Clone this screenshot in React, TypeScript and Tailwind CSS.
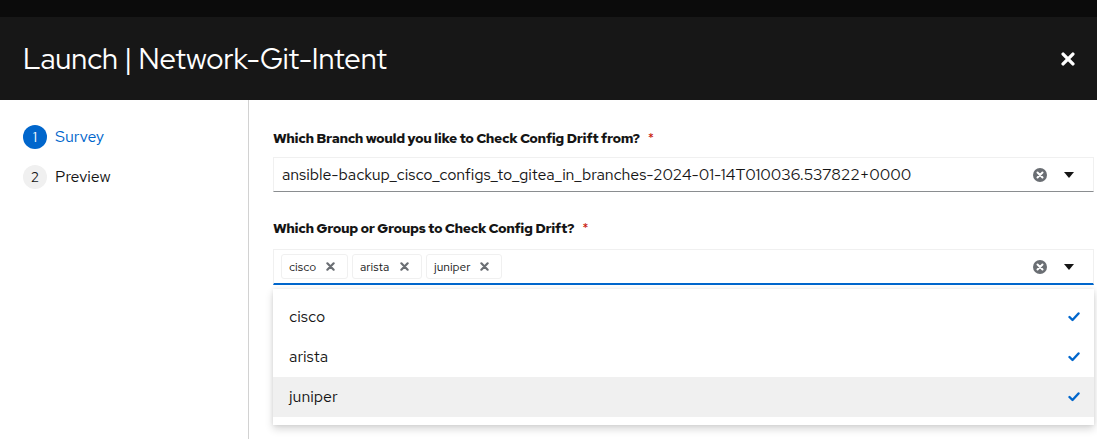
import React from "react";

const font = { fontFamily: '"Red Hat Text", "Open Sans", "Noto Sans", sans-serif' };

function ClearIcon() {
  return (
    <svg width="14" height="14" viewBox="0 0 14 14">
      <circle cx="7" cy="7" r="7" fill="#6a6e73" />
      <path d="M4.5 4.5 L9.5 9.5 M9.5 4.5 L4.5 9.5" stroke="#fff" strokeWidth="2" strokeLinecap="round" />
    </svg>
  );
}

function Caret() {
  return (
    <svg width="10" height="6" viewBox="0 0 10 6">
      <path d="M0 0 L10 0 L5 6 Z" fill="#151515" />
    </svg>
  );
}

function SmallX({ color = "#6a6e73", size = 9 }: { color?: string; size?: number }) {
  return (
    <svg width={size} height={size} viewBox="0 0 10 10">
      <path d="M1.5 1.5 L8.5 8.5 M8.5 1.5 L1.5 8.5" stroke={color} strokeWidth="2.4" strokeLinecap="round" />
    </svg>
  );
}

function Check() {
  return (
    <svg width="12" height="10" viewBox="0 0 12 10">
      <path d="M1.5 5 L4.5 8 L10.5 1.5" stroke="#0066cc" strokeWidth="2.4" fill="none" strokeLinecap="round" strokeLinejoin="round" />
    </svg>
  );
}

function Chip({ label, w }: { label: string; w: string }) {
  return (
    <div className={`flex h-[25px] items-center justify-between rounded-[3px] border border-[#f0f0f0] bg-white pl-[7px] pr-[12px] text-[12px] text-[#151515] ${w}`}>
      <span>{label}</span>
      <SmallX />
    </div>
  );
}

export default function App() {
  return (
    <div className="relative h-[439px] w-[1097px] overflow-hidden bg-white" style={font}>
      <div className="h-[17px] bg-[#0b0b0b]" />
      <div className="flex h-[83px] items-center justify-between bg-[#171717] pl-[23px] pr-[22px]">
        <h1 className="text-[29px] leading-none text-white" style={{ fontFamily: '"Red Hat Display", "Open Sans", "Noto Sans", sans-serif' }}>
          Launch | Network-Git-Intent
        </h1>
        <SmallX color="#ffffff" size={14} />
      </div>
      <div className="flex h-[339px]">
        <div className="w-[249px] shrink-0 border-r border-[#d2d2d2] pl-[23px] pt-[25px]">
          <div className="flex h-[24px] items-center gap-[8px]">
            <div className="flex h-[24px] w-[24px] items-center justify-center rounded-full bg-[#0066cc] text-[14px] text-white">1</div>
            <span className="text-[16px] text-[#0066cc]">Survey</span>
          </div>
          <div className="mt-[16px] flex h-[24px] items-center gap-[8px]">
            <div className="flex h-[24px] w-[24px] items-center justify-center rounded-full bg-[#f0f0f0] text-[14px] text-[#151515]">2</div>
            <span className="text-[16px] text-[#151515]">Preview</span>
          </div>
        </div>
        <div className="flex-1 pl-[24px] pr-[3px] pt-[28px]">
          <div className="flex h-[21px] items-center text-[14px] font-bold tracking-[-0.4px] text-[#151515]">
            Which Branch would you like to Check Config Drift from?
            <span className="ml-[8px] font-normal text-[#c9190b]">*</span>
          </div>
          <div className="mt-[8px] flex h-[35px] items-center border border-[#f0f0f0] border-b-[#8a8d90] pl-[8px] pr-[19px]">
            <span className="flex-1 text-[16px] tracking-[-0.08px] text-[#151515]">ansible-backup_cisco_configs_to_gitea_in_branches-2024-01-14T010036.537822+0000</span>
            <ClearIcon />
            <span className="ml-[17px]"><Caret /></span>
          </div>
          <div className="mt-[26px] flex h-[21px] items-center text-[14px] font-bold tracking-[-0.4px] text-[#151515]">
            Which Group or Groups to Check Config Drift?
            <span className="ml-[8px] font-normal text-[#c9190b]">*</span>
          </div>
          <div className="relative mt-[10px]">
            <div className="flex h-[36px] items-center border border-[#f0f0f0] border-b-2 border-b-[#0066cc] pl-[7px] pr-[19px]">
              <div className="flex flex-1 gap-[4px]">
                <Chip label="cisco" w="w-[67px]" />
                <Chip label="arista" w="w-[70px]" />
                <Chip label="juniper" w="w-[76px]" />
              </div>
              <ClearIcon />
              <span className="ml-[17px]"><Caret /></span>
            </div>
            <div className="absolute left-0 right-0 top-[40px] bg-white py-[8px] shadow-[0_4px_8px_0_rgba(3,3,3,0.16),0_0_4px_0_rgba(3,3,3,0.08)]">
              {["cisco", "arista", "juniper"].map((n, i) => (
                <div key={n} className={`flex h-[40px] items-center justify-between pl-[16px] pr-[14px] text-[16px] text-[#151515] ${i === 2 ? "bg-[#f0f0f0]" : ""}`}>
                  <span>{n}</span>
                  <Check />
                </div>
              ))}
            </div>
          </div>
        </div>
      </div>
    </div>
  );
}
